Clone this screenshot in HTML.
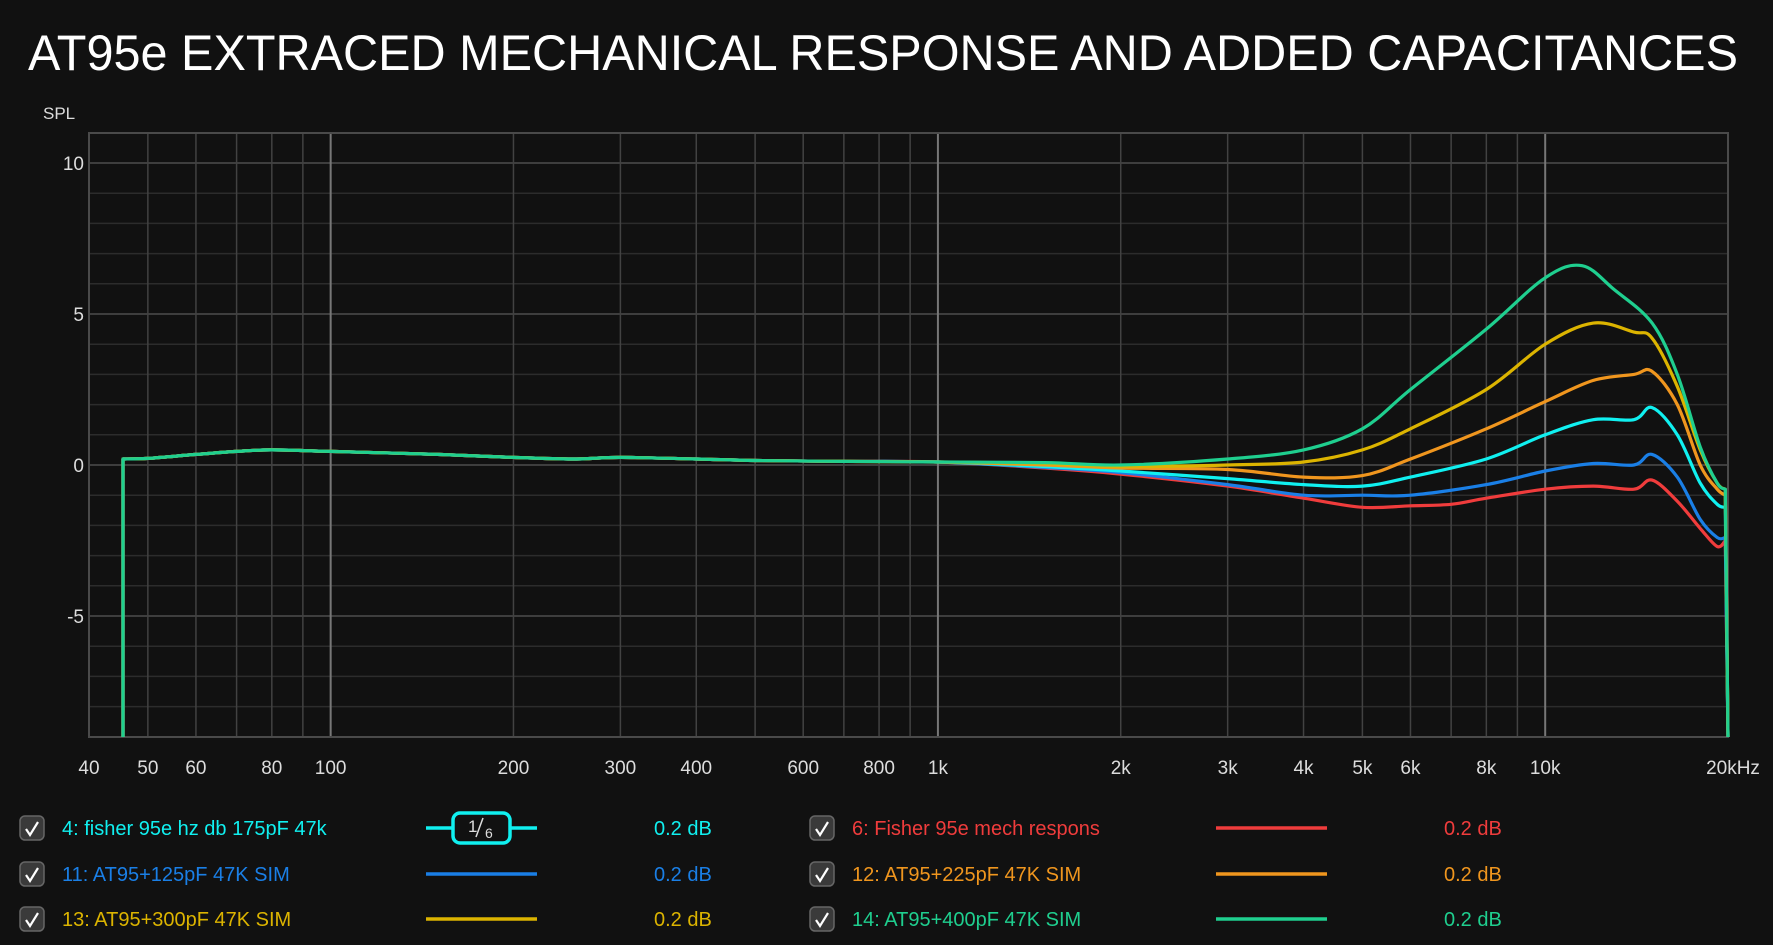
<!DOCTYPE html>
<html><head><meta charset="utf-8">
<style>
html,body{margin:0;padding:0;background:#111;}
svg{display:block;}
text{font-family:"Liberation Sans",sans-serif;}
</style></head>
<body>
<svg id="s" width="1773" height="945" viewBox="0 0 1773 945" xmlns="http://www.w3.org/2000/svg">
<rect width="1773" height="945" fill="#111"/>
<text x="28" y="70" font-size="50" fill="#fff" textLength="1710" lengthAdjust="spacingAndGlyphs">AT95e EXTRACED MECHANICAL RESPONSE AND ADDED CAPACITANCES</text>
<text x="43" y="119" font-size="17" fill="#ddd">SPL</text>
<g id="grid"></g>
<g id="curves" fill="none" stroke-width="3.2" stroke-linejoin="round"></g>
<g id="labels" font-size="19" fill="#ddd"></g>
<g id="legend" font-size="20"></g>
</svg>
<script>
var NS="http://www.w3.org/2000/svg";
function el(p,t,a,txt){var e=document.createElementNS(NS,t);for(var k in a)e.setAttribute(k,a[k]);if(txt)e.textContent=txt;document.getElementById(p).appendChild(e);return e;}
var L=89,R=1728,T=133,B=737;
function X(f){return L+(R-L)*Math.log10(f/40)/Math.log10(500);}
function Y(d){return 465-30.2*d;}
for(var d=-9;d<=10;d++){var y=Y(d);if(y<T||y>B)continue;el("grid","line",{x1:L,x2:R,y1:y,y2:y,stroke:d%5==0?"#4d4d4d":"#2c2c2c","stroke-width":1.5});}
var fs=[50,60,70,80,90,100,200,300,400,500,600,700,800,900,1000,2000,3000,4000,5000,6000,7000,8000,9000,10000];
fs.forEach(function(f){var x=X(f);var maj=(f==100||f==1000||f==10000);el("grid","line",{x1:x,x2:x,y1:T,y2:B,stroke:maj?"#777":"#424242","stroke-width":maj?2:1.5});});
el("grid","rect",{x:L,y:T,width:R-L,height:B-T,fill:"none",stroke:"#4a4a4a","stroke-width":2});
[[10,"10"],[5,"5"],[0,"0"],[-5,"-5"]].forEach(function(v){el("labels","text",{x:84,y:Y(v[0])+7,"text-anchor":"end"},v[1]);});
var xl=[[40,"40"],[50,"50"],[60,"60"],[80,"80"],[100,"100"],[200,"200"],[300,"300"],[400,"400"],[600,"600"],[800,"800"],[1000,"1k"],[2000,"2k"],[3000,"3k"],[4000,"4k"],[5000,"5k"],[6000,"6k"],[8000,"8k"],[10000,"10k"]];
xl.forEach(function(v){el("labels","text",{x:X(v[0]),y:774,"text-anchor":"middle"},v[1]);});
el("labels","text",{x:1733,y:774,"text-anchor":"middle"},"20kHz");
var base=[[45.5,0.2],[50,0.22],[60,0.35],[70,0.45],[80,0.5],[100,0.45],[150,0.35],[200,0.25],[250,0.2],[300,0.25],[400,0.2],[500,0.15],[700,0.12],[1000,0.1]];
var hi={
"#f03c3c":[[1500,-0.1],[2000,-0.3],[3000,-0.7],[4000,-1.1],[5000,-1.4],[6000,-1.35],[7000,-1.3],[8000,-1.1],[10000,-0.8],[12000,-0.7],[14000,-0.8],[15000,-0.5],[16500,-1.2],[18000,-2.1],[19200,-2.7],[19800,-2.5]],
"#1a7fe6":[[1500,-0.08],[2000,-0.25],[3000,-0.65],[4000,-1.0],[5000,-1.0],[6000,-1.0],[8000,-0.65],[10000,-0.2],[12000,0.05],[14000,0.0],[15000,0.35],[16500,-0.4],[18000,-1.8],[19200,-2.4],[19800,-2.4]],
"#10f0f0":[[1500,-0.05],[2000,-0.2],[3000,-0.45],[4000,-0.65],[5000,-0.7],[6000,-0.4],[8000,0.2],[10000,1.0],[12000,1.5],[14000,1.5],[15000,1.9],[16500,1.0],[18000,-0.6],[19200,-1.3],[19800,-1.4]],
"#f0961e":[[1500,0.0],[2000,-0.1],[3000,-0.15],[4000,-0.4],[5000,-0.35],[6000,0.2],[8000,1.2],[10000,2.1],[12000,2.8],[14000,3.0],[15000,3.1],[16500,2.0],[18000,0.0],[19200,-0.8],[19800,-1.0]],
"#dcb400":[[1500,0.05],[2000,-0.05],[3000,0.0],[4000,0.1],[5000,0.5],[6000,1.2],[8000,2.5],[10000,4.0],[12000,4.7],[14000,4.4],[15000,4.2],[16500,2.6],[18000,0.5],[19200,-0.6],[19800,-0.8]],
"#1fcf8f":[[1500,0.08],[2000,0.0],[3000,0.2],[4000,0.5],[5000,1.2],[6000,2.5],[8000,4.5],[10000,6.2],[11500,6.6],[13000,5.8],[15000,4.7],[16500,3.0],[18000,0.6],[19200,-0.6],[19800,-0.8]]
};
function path(pts){var P=pts.map(function(p){return [X(p[0]),Y(p[1])];});var d="M"+P[0][0].toFixed(1)+" "+P[0][1].toFixed(1);
for(var i=0;i<P.length-1;i++){var p0=P[i-1]||P[i],p1=P[i],p2=P[i+1],p3=P[i+2]||p2;
d+=" C"+(p1[0]+(p2[0]-p0[0])/6).toFixed(1)+" "+(p1[1]+(p2[1]-p0[1])/6).toFixed(1)+" "+(p2[0]-(p3[0]-p1[0])/6).toFixed(1)+" "+(p2[1]-(p3[1]-p1[1])/6).toFixed(1)+" "+p2[0].toFixed(1)+" "+p2[1].toFixed(1);}
return d;}
Object.keys(hi).forEach(function(c){var pts=base.concat(hi[c]);var d=path(pts);
d="M"+X(45.5).toFixed(1)+" "+B+" L"+d.slice(1)+" L"+X(20000).toFixed(1)+" "+B;
el("curves","path",{d:d,stroke:c});});
var items=[
[20,828,"4: fisher 95e hz db 175pF 47k","#10f0f0",true],
[20,874,"11: AT95+125pF 47K SIM","#1a7fe6"],
[20,919,"13: AT95+300pF 47K SIM","#dcb400"],
[810,828,"6: Fisher 95e mech respons","#f03c3c"],
[810,874,"12: AT95+225pF 47K SIM","#f0961e"],
[810,919,"14: AT95+400pF 47K SIM","#1fcf8f"]];
items.forEach(function(it){var x=it[0],y=it[1],c=it[3];
el("legend","rect",{x:x,y:y-12,width:24,height:24,rx:5,fill:"#3a3a3a",stroke:"#666","stroke-width":1.5});
el("legend","path",{d:"M"+(x+6)+" "+(y+1)+" l4 6 l8 -13",fill:"none",stroke:"#fff","stroke-width":2.2});
el("legend","text",{x:x+42,y:y+7,fill:c},it[2]);
var lx=x+406;
el("legend","line",{x1:lx,x2:lx+111,y1:y,y2:y,stroke:c,"stroke-width":3.5});
if(it[4]){el("legend","rect",{x:lx+27,y:y-15,width:57,height:30,rx:7,fill:"#111",stroke:c,"stroke-width":3.5});
el("legend","text",{x:lx+42,y:y+4,fill:"#ddd","font-size":17},"1");
el("legend","line",{x1:lx+50,y1:y+9,x2:lx+57,y2:y-10,stroke:"#ddd","stroke-width":1.5});
el("legend","text",{x:lx+59,y:y+10,fill:"#ddd","font-size":14},"6");}
el("legend","text",{x:x+634,y:y+7,fill:c},"0.2 dB");});
</script>
</body></html>
